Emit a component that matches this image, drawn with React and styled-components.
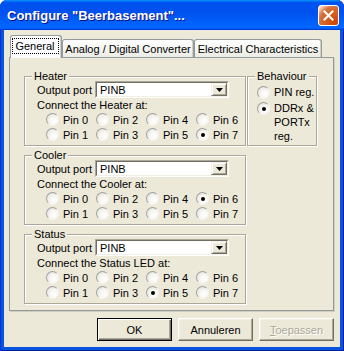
import React from 'react';
import styled, { createGlobalStyle } from 'styled-components';

const Global = createGlobalStyle`
  html, body { margin: 0; padding: 0; background: #ffffff; }
  body { font-family: "Liberation Sans", Arial, sans-serif; font-size: 11px; color: #000; }
  * { box-sizing: border-box; }
`;

const FACE = '#ece9d8';

const Window = styled.div`
  width: 344px;
  height: 351px;
  display: flex;
  flex-direction: column;
  background: #0855dd;
  border-radius: 7px 7px 0 0;
  overflow: hidden;
  box-shadow: inset 1px 0 #0831d9, inset -1px 0 #001ea0, inset 0 -1px #001ea0;
`;

const TitleBar = styled.div`
  height: 30px;
  flex: none;
  display: flex;
  align-items: center;
  justify-content: space-between;
  padding: 0 5px 0 7px;
  background: linear-gradient(to bottom, #0997ff 0%, #0053ee 8%, #0050ee 40%, #0066ff 88%, #0066ff 93%, #005bff 95%, #003dd7 96%, #003dd7 100%);
`;

const Title = styled.span`
  font-family: "Liberation Sans", Arial, sans-serif;
  font-weight: bold;
  font-size: 13px;
  color: #fff;
  text-shadow: 1px 1px #0f1089;
  letter-spacing: 0;
`;

const CloseButton = styled.div`
  width: 21px;
  height: 21px;
  border: 1px solid #fff;
  border-radius: 3px;
  display: flex;
  align-items: center;
  justify-content: center;
  background: radial-gradient(circle at 90% 90%, #cc4600 0%, #dc6527 55%, #cd7546 70%, #ffccb2 90%, #fff 100%);
`;

const Client = styled.div`
  flex: 1;
  margin: 0 4px 4px;
  background: ${FACE};
  display: flex;
  flex-direction: column;
  padding: 5px 6px 0 5px;
`;

const TabStrip = styled.div`
  height: 22px;
  display: flex;
  align-items: flex-end;
  padding-left: 1px;
  position: relative;
  z-index: 1;
`;

const Tab = styled.div`
  width: ${p => p.$w}px;
  height: ${p => (p.$active ? 23 : 18)}px;
  margin-bottom: ${p => (p.$active ? -1 : 0)}px;
  border: 1px solid #919b9c;
  border-bottom: none;
  border-radius: 3px 3px 0 0;
  background: ${p => (p.$active ? '#fcfcfe' : 'linear-gradient(to bottom, #ffffff, #f3f3ef 60%, #ecebe5)')};
  box-shadow: inset -1px 0 #d4d0c8;
  display: flex;
  justify-content: center;
  padding-top: ${p => (p.$active ? 2 : 2)}px;
  line-height: 14px;
  white-space: nowrap;
`;

const FocusLabel = styled.span`
  display: inline-block;
  height: 16px;
  width: 47px;
  margin-left: -2px;
  border: 1px dotted #000;
  text-align: center;
  line-height: 14px;
`;

const Panel = styled.div`
  height: 254px;
  border: 1px solid #919b9c;
  box-shadow: 1px 1px 0 #d0cebf;
  background: ${FACE};
  display: flex;
  align-items: flex-start;
  padding: 12px 0 0 14px;
  gap: 1px;
`;

const LeftCol = styled.div`
  width: 222px;
  display: flex;
  flex-direction: column;
  gap: 3px;
`;

const Group = styled.fieldset`
  margin: 0;
  padding: 0 0 2px 0;
  width: ${p => p.$w}px;
  height: 76px;
  min-width: 0;
  border: 1px solid #aca899;
  box-shadow: inset 1px 1px 0 #fff, 1px 1px 0 #fff;
`;

const Legend = styled.legend`
  margin-left: 7px;
  padding: 0 2px;
  line-height: 12px;
  height: 12px;
  background: ${FACE};
`;

const PortRow = styled.div`
  display: flex;
  align-items: center;
  height: 17px;
  margin-top: -1px;
  padding-left: 12px;
`;

const PortLabel = styled.span`
  width: 58px;
  white-space: nowrap;
`;

const ComboOuter = styled.div`
  width: 134px;
  height: 17px;
  border: 1px solid;
  border-color: #aca899 #fff #fff #aca899;
`;

const ComboInner = styled.div`
  height: 100%;
  display: flex;
  align-items: center;
  background: #fff;
  border: 1px solid;
  border-color: #716f64 #f1efe2 #f1efe2 #716f64;
`;

const ComboText = styled.span`
  flex: 1;
  padding-left: 3px;
`;

const ComboButton = styled.div`
  width: 16px;
  height: 13px;
  background: ${FACE};
  border: 1px solid;
  border-color: #f1efe2 #716f64 #716f64 #f1efe2;
  box-shadow: inset 1px 1px 0 #fff, inset -1px -1px 0 #aca899;
  display: flex;
  align-items: center;
  justify-content: center;
`;

const ConnectLabel = styled.div`
  height: 14px;
  line-height: 14px;
  padding-left: 12px;
  white-space: nowrap;
`;

const RadioGrid = styled.div`
  display: grid;
  grid-auto-flow: column;
  grid-template-rows: repeat(2, 15px);
  grid-template-columns: repeat(4, 50px);
  padding-left: 21px;
`;

const RadioItem = styled.label`
  display: flex;
  align-items: ${p => (p.$top ? 'flex-start' : 'center')};
  gap: 4px;
  white-space: ${p => (p.$wrap ? 'normal' : 'nowrap')};
  line-height: 14px;
`;

const RadioCircle = styled.span`
  flex: none;
  width: 13px;
  height: 13px;
  border-radius: 50%;
  border: 1px solid;
  border-color: #a0a0a0 #f4f4f4 #f4f4f4 #a0a0a0;
  background: radial-gradient(circle at 65% 65%, #ffffff 0%, #f6f5f0 45%, #dcdad0 100%);
  display: flex;
  align-items: center;
  justify-content: center;
  margin-top: ${p => (p.$top ? 1 : 0)}px;
  &::after {
    content: '';
    width: 4px;
    height: 4px;
    border-radius: 50%;
    background: ${p => (p.$checked ? '#000' : 'transparent')};
  }
`;

const BehaviourBody = styled.div`
  display: flex;
  flex-direction: column;
  gap: 2px;
  padding: 3px 0 0 9px;
`;

const WrapText = styled.span`
  width: 42px;
`;

const ButtonRow = styled.div`
  display: flex;
  justify-content: flex-end;
  gap: 6px;
  margin-top: 7px;
`;

const Button = styled.button`
  width: 75px;
  height: 23px;
  padding: 0;
  font-family: "Liberation Sans", Arial, sans-serif;
  font-size: 11px;
  color: ${p => (p.disabled ? '#aca899' : '#000')};
  text-shadow: ${p => (p.disabled ? '1px 1px 0 #fff' : 'none')};
  background: ${FACE};
  border: 1px solid;
  border-color: ${p => (p.$default ? '#000' : '#fff #716f64 #716f64 #fff')};
  box-shadow: ${p =>
    p.$default
      ? 'inset 1px 1px 0 #fff, inset -1px -1px 0 #716f64, inset -2px -2px 0 #aca899'
      : 'inset -1px -1px 0 #aca899, inset 1px 1px 0 #f1efe2'};
`;

function Radio({ label, checked }) {
  return (
    <RadioItem>
      <RadioCircle $checked={checked} />
      <span>{label}</span>
    </RadioItem>
  );
}

function Arrow() {
  return (
    <svg width="7" height="4" viewBox="0 0 7 4">
      <polygon points="0,0 7,0 3.5,4" fill="#000" />
    </svg>
  );
}

function PinGroup({ title, connect, checked }) {
  const pins = [0, 1, 2, 3, 4, 5, 6, 7];
  return (
    <Group $w={222}>
      <Legend>{title}</Legend>
      <PortRow>
        <PortLabel>Output port</PortLabel>
        <ComboOuter>
          <ComboInner>
            <ComboText>PINB</ComboText>
            <ComboButton>
              <Arrow />
            </ComboButton>
          </ComboInner>
        </ComboOuter>
      </PortRow>
      <ConnectLabel>{connect}</ConnectLabel>
      <RadioGrid>
        {pins.map(n => (
          <Radio key={n} label={`Pin ${n}`} checked={n === checked} />
        ))}
      </RadioGrid>
    </Group>
  );
}

export default function App() {
  return (
    <>
      <Global />
      <Window>
        <TitleBar>
          <Title>Configure "Beerbasement"...</Title>
          <CloseButton>
            <svg width="11" height="11" viewBox="0 0 11 11">
              <path d="M1.5 1.5 L9.5 9.5 M9.5 1.5 L1.5 9.5" stroke="#fff" strokeWidth="2" strokeLinecap="square" />
            </svg>
          </CloseButton>
        </TitleBar>
        <Client>
          <TabStrip>
            <Tab $w={52} $active>
              <FocusLabel>General</FocusLabel>
            </Tab>
            <Tab $w={132}>Analog / Digital Converter</Tab>
            <Tab $w={128}>Electrical Characteristics</Tab>
          </TabStrip>
          <Panel>
            <LeftCol>
              <PinGroup title="Heater" connect="Connect the Heater at:" checked={7} />
              <PinGroup title="Cooler" connect="Connect the Cooler at:" checked={6} />
              <PinGroup title="Status" connect="Connect the Status LED at:" checked={5} />
            </LeftCol>
            <Group $w={70}>
              <Legend>Behaviour</Legend>
              <BehaviourBody>
                <RadioItem $top>
                  <RadioCircle $top />
                  <span>PIN reg.</span>
                </RadioItem>
                <RadioItem $top $wrap>
                  <RadioCircle $top $checked />
                  <WrapText>DDRx &amp; PORTx reg.</WrapText>
                </RadioItem>
              </BehaviourBody>
            </Group>
          </Panel>
          <ButtonRow>
            <Button $default>OK</Button>
            <Button>Annuleren</Button>
            <Button disabled>
              <u>T</u>oepassen
            </Button>
          </ButtonRow>
        </Client>
      </Window>
    </>
  );
}
